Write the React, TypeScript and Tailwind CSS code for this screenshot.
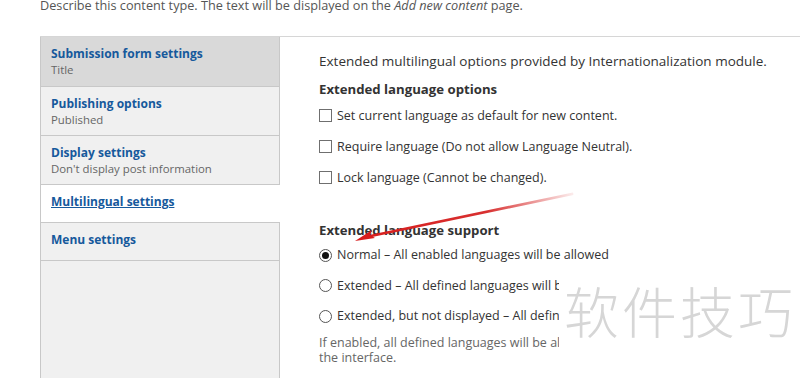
import React from "react";

const tabs = [
  { title: "Submission form settings", summary: "Title", h: "h-[50px]", bg: "bg-[#d9d9d9]" },
  { title: "Publishing options", summary: "Published", h: "h-[49px]", bg: "bg-[#f0f0f0]" },
  { title: "Display settings", summary: "Don't display post information", h: "h-[49px]", bg: "bg-[#f0f0f0]" },
  { title: "Multilingual settings", summary: "", h: "h-[38px]", bg: "bg-white", active: true },
  { title: "Menu settings", summary: "", h: "h-[38px]", bg: "bg-[#f0f0f0]" },
];

function Checkbox({ label }: { label: string }) {
  return (
    <div className="flex items-center h-[31px]">
      <span className="w-[13px] h-[13px] border border-[#6f6f6f] bg-white mr-[5px] shrink-0" />
      <span>{label}</span>
    </div>
  );
}

function Radio({ label, checked, clip }: { label: string; checked?: boolean; clip?: boolean }) {
  return (
    <div className={`flex items-center h-[30.5px] whitespace-nowrap ${clip ? "w-[240px] overflow-hidden" : ""}`}>
      <span className="w-[13px] h-[13px] rounded-full border border-[#555] bg-white mr-[5px] shrink-0 flex items-center justify-center">
        {checked && <span className="w-[7px] h-[7px] rounded-full bg-[#111]" />}
      </span>
      <span>{label}</span>
    </div>
  );
}

export default function App() {
  return (
    <div className="relative w-[800px] h-[378px] overflow-hidden bg-white text-[#333] font-['Open_Sans',sans-serif]">
      <div className="pl-[40px] text-[12.7px] text-[#555] leading-[14px] -mt-[2px] h-[38px] whitespace-nowrap">
        Describe this content type. The text will be displayed on the <em>Add new content</em> page.
      </div>
      <div className="flex border-t border-[#d6d6d6] ml-[40px] h-[342px]">
        <div className="w-[240px] shrink-0 bg-[#f0f0f0] border-l border-r border-[#c8c8c8] flex flex-col">
          {tabs.map((t) => (
            <div
              key={t.title}
              className={`${t.h} ${t.bg} border-b border-[#c8c8c8] px-[10px] pt-[9px] ${t.active ? "-mr-px" : ""}`}
            >
              <div className={`text-[12px] font-bold leading-[16px] text-[#16599c] ${t.active ? "underline" : ""}`}>{t.title}</div>
              {t.summary && <div className="text-[11.4px] leading-[16px] text-[#666]">{t.summary}</div>}
            </div>
          ))}
        </div>
        <div className="flex-1 pl-[39px] pt-[16px] text-[12.5px] leading-[16px]">
          <div className="text-[13.5px] mb-[12px] whitespace-nowrap">Extended multilingual options provided by Internationalization module.</div>
          <div className="font-bold text-[13.2px] mb-[3px] mt-[1px]">Extended language options</div>
          <Checkbox label="Set current language as default for new content." />
          <Checkbox label="Require language (Do not allow Language Neutral)." />
          <Checkbox label="Lock language (Cannot be changed)." />
          <div className="font-bold text-[13.2px] mt-[29px] mb-[2px]">Extended language support</div>
          <Radio checked label="Normal – All enabled languages will be allowed" />
          <Radio clip label="Extended – All defined languages will be allowed" />
          <Radio clip label="Extended, but not displayed – All defined languages will be allowed" />
          <div className="text-[#666] mt-[3px] leading-[15px] w-[240px]">
            <div className="whitespace-nowrap overflow-hidden">If enabled, all defined languages will be allowed for content, but not displayed in</div>
            <div>the interface.</div>
          </div>
        </div>
      </div>
      <div className="absolute left-[560px] top-[262px] w-[240px] h-[88px] bg-white flex items-center justify-center pt-[6px]">
        <span className="text-[55px] leading-none text-[#d6d6d6] tracking-[3px] font-['Noto_Sans_CJK_SC',sans-serif] font-light">软件技巧</span>
      </div>
      <svg className="absolute left-0 top-0" width="800" height="378">
        <defs>
          <linearGradient id="g" x1="358" y1="238" x2="572" y2="193" gradientUnits="userSpaceOnUse">
            <stop offset="0" stopColor="#d81c1c" />
            <stop offset="0.6" stopColor="#d83030" />
            <stop offset="1" stopColor="#d83030" stopOpacity="0.1" />
          </linearGradient>
        </defs>
        <path d="M366 237 L572 194" stroke="url(#g)" strokeWidth="2.8" strokeLinecap="round" />
        <path d="M355 241 L372 230 L370 235 L375 238 Z" fill="#d81c1c" />
      </svg>
    </div>
  );
}
